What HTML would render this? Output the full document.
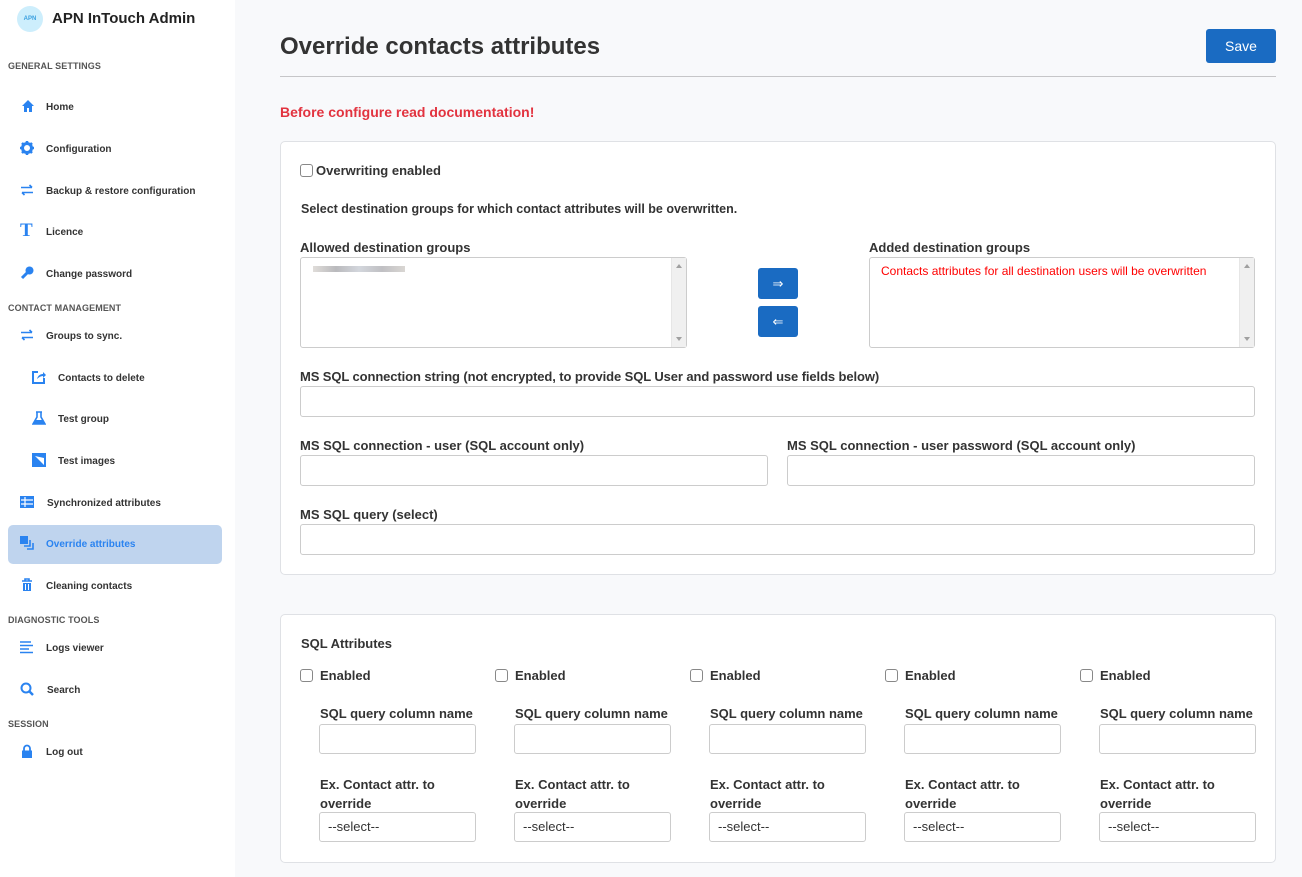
<!DOCTYPE html>
<html><head><meta charset="utf-8">
<style>
*{box-sizing:border-box;margin:0;padding:0}
body{width:1302px;height:877px;overflow:hidden;background:#f8f9fb;font-family:"Liberation Sans",Arial,sans-serif;color:#333;position:relative}
.a{position:absolute}
#sb{position:absolute;left:0;top:0;width:235px;height:877px;background:#fff}
.sec{position:absolute;left:8px;font-size:9px;font-weight:bold;color:#555;letter-spacing:0.1px}
.it{position:absolute;font-size:10px;font-weight:bold;color:#333;line-height:12px;margin-top:1px}
.ic{position:absolute;width:14px;height:14px}
.card{position:absolute;background:#fff;border:1px solid #dfe1e5;border-radius:5px}
.lb{position:absolute;font-size:13px;font-weight:bold;color:#333;line-height:16px;margin-top:1px}
.in{position:absolute;border:1px solid #ccc;border-radius:3px;background:#fff}
.cb{position:absolute;width:13px;height:13px;border:1px solid #888;border-radius:3px;background:#fff}
.btn{position:absolute;background:#1a6bc2;border-radius:3px;color:#fff;text-align:center}
.sel{font-size:13px;color:#333;padding-left:8px;line-height:27px}
.scr{position:absolute;right:0;top:0;bottom:0;width:15px;background:#f0f0f0;border-left:1px solid #e6e6e6}
</style></head><body>
<div id="sb">
  <div class="a" style="left:17px;top:6px;width:26px;height:26px;border-radius:50%;background:#cdeefc;color:#3aa0e0;font-size:6px;font-weight:bold;text-align:center;line-height:26px">APN</div>
  <div class="a" style="left:52px;top:10px;font-size:15px;font-weight:bold;color:#222">APN InTouch Admin</div>
  <div class="sec" style="top:61px">GENERAL SETTINGS</div>
  <svg class="ic" style="left:21px;top:99px" viewBox="0 0 14 14"><path d="M7 1L1 7h2v6h3V9h2v4h3V7h2z" fill="#2a83f0"/></svg>
  <div class="it" style="left:46px;top:101px">Home</div>
  <svg class="ic" style="left:20px;top:141px" viewBox="0 0 14 14"><circle cx="7" cy="7" r="4.5" fill="none" stroke="#2a83f0" stroke-width="3"/><g stroke="#2a83f0" stroke-width="2.5"><path d="M7 0v3M7 11v3M0 7h3M11 7h3M2 2l2 2M10 10l2 2M12 2l-2 2M2 12l2-2"/></g></svg>
  <div class="it" style="left:46px;top:143px">Configuration</div>
  <svg class="ic" style="left:20px;top:183px" viewBox="0 0 14 14"><path d="M1 4.5h11M9.5 2l2.5 2.5M13 9.5H2M4.5 12L2 9.5" stroke="#2a83f0" stroke-width="1.6" fill="none"/></svg>
  <div class="it" style="left:46px;top:185px">Backup &amp; restore configuration</div>
  <div class="a" style="left:20px;top:220px;font-family:'Liberation Serif',serif;font-weight:bold;font-size:19px;color:#2a83f0">T</div>
  <div class="it" style="left:46px;top:226px">Licence</div>
  <svg class="ic" style="left:20px;top:266px" viewBox="0 0 14 14"><circle cx="9.5" cy="4.5" r="4" fill="#2a83f0"/><path d="M7 7L2 12" stroke="#2a83f0" stroke-width="3"/></svg>
  <div class="it" style="left:46px;top:268px">Change password</div>
  <div class="sec" style="top:303px">CONTACT MANAGEMENT</div>
  <svg class="ic" style="left:20px;top:328px" viewBox="0 0 14 14"><path d="M1 4.5h11M9.5 2l2.5 2.5M13 9.5H2M4.5 12L2 9.5" stroke="#2a83f0" stroke-width="1.6" fill="none"/></svg>
  <div class="it" style="left:46px;top:330px">Groups to sync.</div>
  <svg class="ic" style="left:32px;top:370px" viewBox="0 0 14 14"><path d="M6 2H1v11h11V8" stroke="#2a83f0" stroke-width="2" fill="none"/><path d="M5 9c1-4 4-5 6-5V2l3 3-3 3V6c-2 0-4 1-6 3z" fill="#2a83f0"/></svg>
  <div class="it" style="left:58px;top:372px">Contacts to delete</div>
  <svg class="ic" style="left:32px;top:411px" viewBox="0 0 14 14"><path d="M4 1h6M5 1v5L1 13h12L9 6V1" stroke="#2a83f0" stroke-width="1.6" fill="none"/><path d="M3 9h8l2 4H1z" fill="#2a83f0"/></svg>
  <div class="it" style="left:58px;top:413px">Test group</div>
  <svg class="ic" style="left:32px;top:453px" viewBox="0 0 14 14"><rect x="0" y="0" width="14" height="14" fill="#2a83f0"/><path d="M3 3l9 9V5z" fill="#fff"/></svg>
  <div class="it" style="left:58px;top:455px">Test images</div>
  <svg class="ic" style="left:20px;top:495px" viewBox="0 0 14 14"><rect x="0" y="1" width="14" height="12" fill="#2a83f0"/><path d="M1 5h12M1 9h12M5 2v10" stroke="#fff" stroke-width="1.2"/></svg>
  <div class="it" style="left:47px;top:497px">Synchronized attributes</div>
  <div class="a" style="left:8px;top:525px;width:214px;height:39px;background:#bfd4ee;border-radius:5px"></div>
  <svg class="ic" style="left:20px;top:536px" viewBox="0 0 14 14"><rect x="0" y="0" width="8" height="8" fill="#2a83f0"/><path d="M10 4v6H4M13 7v6H7" stroke="#2a83f0" stroke-width="1.6" fill="none"/></svg>
  <div class="it" style="left:46px;top:538px;color:#2a83f0">Override attributes</div>
  <svg class="ic" style="left:20px;top:578px" viewBox="0 0 14 14"><path d="M2 3h10M5 3V1h4v2" stroke="#2a83f0" stroke-width="1.6" fill="none"/><path d="M3 5h8v8H3z" fill="#2a83f0"/><path d="M5.5 6v6M8.5 6v6" stroke="#fff"/></svg>
  <div class="it" style="left:46px;top:580px">Cleaning contacts</div>
  <div class="sec" style="top:615px">DIAGNOSTIC TOOLS</div>
  <svg class="ic" style="left:20px;top:640px" viewBox="0 0 14 14"><path d="M0 2h11M0 5.5h13M0 9h9M0 12.5h13" stroke="#2a83f0" stroke-width="1.5"/></svg>
  <div class="it" style="left:46px;top:642px">Logs viewer</div>
  <svg class="ic" style="left:20px;top:682px" viewBox="0 0 14 14"><circle cx="6" cy="6" r="4.5" stroke="#2a83f0" stroke-width="2" fill="none"/><path d="M9 9l4 4" stroke="#2a83f0" stroke-width="2.5"/></svg>
  <div class="it" style="left:47px;top:684px">Search</div>
  <div class="sec" style="top:719px">SESSION</div>
  <svg class="ic" style="left:20px;top:744px" viewBox="0 0 14 14"><path d="M4 7V4.5a3 3 0 0 1 6 0V7" stroke="#2a83f0" stroke-width="1.8" fill="none"/><rect x="2" y="6.5" width="10" height="7.5" fill="#2a83f0"/></svg>
  <div class="it" style="left:46px;top:746px">Log out</div>
</div>

<div class="a" style="left:280px;top:33px;font-size:24px;font-weight:bold;color:#333">Override contacts attributes</div>
<div class="btn" style="left:1206px;top:29px;width:70px;height:34px;font-size:14px;line-height:34px">Save</div>
<div class="a" style="left:280px;top:76px;width:996px;height:1px;background:#c6c6c8"></div>
<div class="a" style="left:280px;top:104px;font-size:14px;font-weight:bold;color:#e2333f">Before configure read documentation!</div>

<div class="card" style="left:280px;top:141px;width:996px;height:434px"></div>
<div class="cb" style="left:300px;top:164px"></div>
<div class="lb" style="left:316px;top:162px">Overwriting enabled</div>
<div class="lb" style="left:301px;top:200px;font-size:12.5px">Select destination groups for which contact attributes will be overwritten.</div>
<div class="lb" style="left:300px;top:239px">Allowed destination groups</div>
<div class="in" style="left:300px;top:257px;width:387px;height:91px;border-radius:3px"><div class="a" style="left:12px;top:8px;width:92px;height:6px;background:linear-gradient(90deg,#d8d4d0,#a8a8ac,#c8ccd4,#b0b0b4,#d0ccc8);opacity:.8"></div><div class="scr"><div class="a" style="left:4px;top:6px;border:3px solid transparent;border-bottom:4px solid #a0a0a0;border-top:0"></div><div class="a" style="left:4px;bottom:6px;border:3px solid transparent;border-top:4px solid #a0a0a0;border-bottom:0"></div></div></div>
<div class="btn" style="left:758px;top:268px;width:40px;height:31px;font-size:13px;line-height:31px">⇒</div>
<div class="btn" style="left:758px;top:306px;width:40px;height:31px;font-size:13px;line-height:31px">⇐</div>
<div class="lb" style="left:869px;top:239px">Added destination groups</div>
<div class="in" style="left:869px;top:257px;width:386px;height:91px"><div class="a" style="left:11px;top:6px;font-size:12px;color:#f00;white-space:nowrap">Contacts attributes for all destination users will be overwritten</div><div class="scr"><div class="a" style="left:4px;top:6px;border:3px solid transparent;border-bottom:4px solid #a0a0a0;border-top:0"></div><div class="a" style="left:4px;bottom:6px;border:3px solid transparent;border-top:4px solid #a0a0a0;border-bottom:0"></div></div></div>
<div class="lb" style="left:300px;top:368px;letter-spacing:-0.1px">MS SQL connection string (not encrypted, to provide SQL User and password use fields below)</div>
<div class="in" style="left:300px;top:386px;width:955px;height:31px"></div>
<div class="lb" style="left:300px;top:437px">MS SQL connection - user (SQL account only)</div>
<div class="in" style="left:300px;top:455px;width:468px;height:31px"></div>
<div class="lb" style="left:787px;top:437px">MS SQL connection - user password (SQL account only)</div>
<div class="in" style="left:787px;top:455px;width:468px;height:31px"></div>
<div class="lb" style="left:300px;top:506px">MS SQL query (select)</div>
<div class="in" style="left:300px;top:524px;width:955px;height:31px"></div>

<div class="card" style="left:280px;top:614px;width:996px;height:249px"></div>
<div class="lb" style="left:301px;top:635px;font-size:13px">SQL Attributes</div>

<div id="cols"></div>
<script>
var h='';
for(var i=0;i<5;i++){var x=300+195*i;
h+='<div class="cb" style="left:'+x+'px;top:669px"></div>';
h+='<div class="lb" style="left:'+(x+20)+'px;top:667px">Enabled</div>';
h+='<div class="lb" style="left:'+(x+20)+'px;top:705px">SQL query column name</div>';
h+='<div class="in" style="left:'+(x+19)+'px;top:724px;width:157px;height:30px"></div>';
h+='<div class="lb" style="left:'+(x+20)+'px;top:774px;line-height:19px;width:150px">Ex. Contact attr. to<br>override</div>';
h+='<div class="in sel" style="left:'+(x+19)+'px;top:812px;width:157px;height:30px">--select--</div>';}
document.getElementById('cols').innerHTML=h;
</script>
</body></html>
